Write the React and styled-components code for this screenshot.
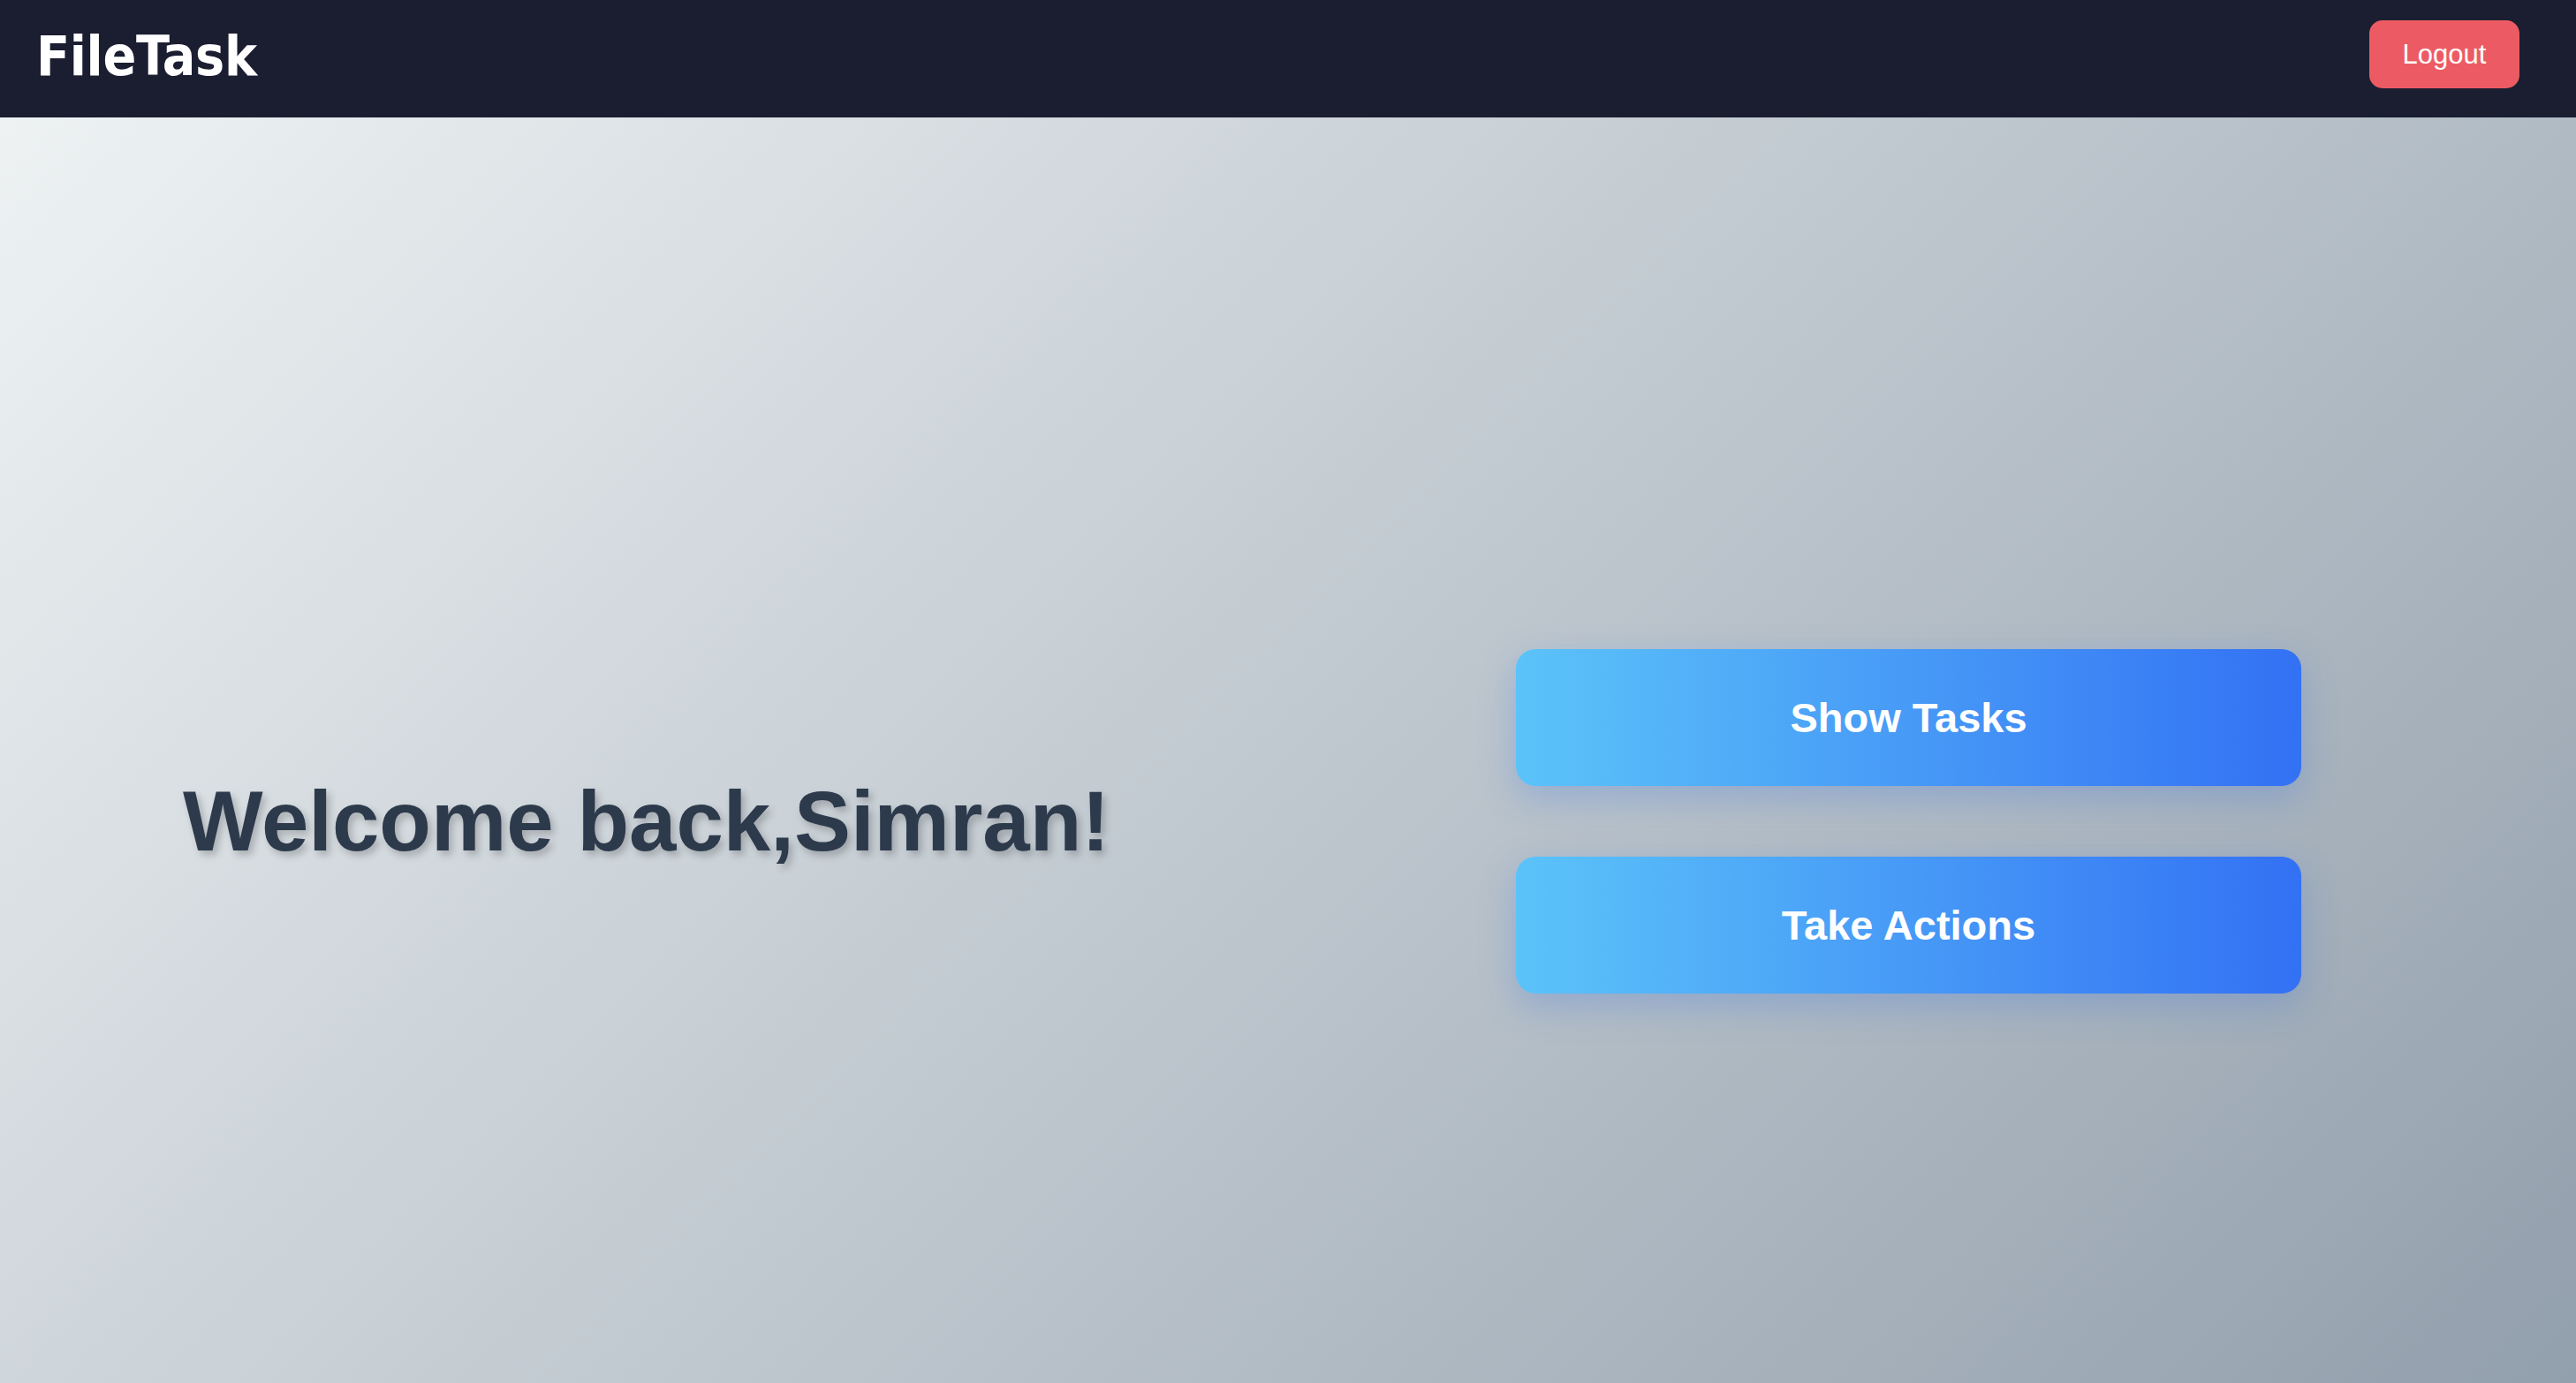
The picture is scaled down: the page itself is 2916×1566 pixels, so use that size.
import React from 'react';
import styled, { createGlobalStyle } from 'styled-components';

const GlobalStyle = createGlobalStyle`
  html, body {
    margin: 0;
    padding: 0;
    height: 100%;
  }
  body {
    font-family: 'Liberation Sans', Arial, sans-serif;
    overflow: hidden;
  }
  * {
    box-sizing: border-box;
  }
`;

const Page = styled.div`
  display: flex;
  flex-direction: column;
  height: 100vh;
`;

const NavBar = styled.header`
  display: flex;
  align-items: center;
  justify-content: space-between;
  height: 133px;
  flex-shrink: 0;
  padding: 0 64px 0 41px;
  background: #1b1e31;
`;

const Brand = styled.div`
  font-family: 'DejaVu Sans Condensed', 'DejaVu Sans', sans-serif;
  font-weight: 700;
  font-size: 62px;
  color: #ffffff;
  letter-spacing: -0.3px;
  margin-top: -6px;
`;

const LogoutButton = styled.button`
  width: 170px;
  height: 77px;
  margin-top: -10px;
  border: none;
  border-radius: 15px;
  background: #ec5b63;
  color: #ffffff;
  font-family: 'Liberation Sans', Arial, sans-serif;
  font-size: 31px;
  cursor: pointer;
`;

const Main = styled.main`
  flex: 1;
  display: flex;
  align-items: center;
  justify-content: space-between;
  padding: 160px 311px 0 207px;
  background: linear-gradient(135deg, #eef2f3 0%, #929fac 100%);
`;

const Greeting = styled.h1`
  margin: 0;
  font-family: 'Liberation Sans', Arial, sans-serif;
  font-weight: 700;
  font-size: 96px;
  color: #2d3a4c;
  text-shadow: 4px 5px 8px rgba(0, 0, 0, 0.22);
  white-space: nowrap;
`;

const ActionColumn = styled.div`
  display: flex;
  flex-direction: column;
  gap: 80px;
  width: 889px;
`;

const ActionButton = styled.button`
  height: 155px;
  border: none;
  border-radius: 22px;
  background: linear-gradient(90deg, #5bc3f9 0%, #3371f4 100%);
  color: #ffffff;
  font-family: 'Liberation Sans', Arial, sans-serif;
  font-weight: 700;
  font-size: 47px;
  box-shadow: 0 14px 40px rgba(59, 120, 230, 0.28);
  cursor: pointer;
`;

const App = () => (
  <Page>
    <GlobalStyle />
    <NavBar>
      <Brand>FileTask</Brand>
      <LogoutButton>Logout</LogoutButton>
    </NavBar>
    <Main>
      <Greeting>Welcome back,Simran!</Greeting>
      <ActionColumn>
        <ActionButton>Show Tasks</ActionButton>
        <ActionButton>Take Actions</ActionButton>
      </ActionColumn>
    </Main>
  </Page>
);

export default App;
